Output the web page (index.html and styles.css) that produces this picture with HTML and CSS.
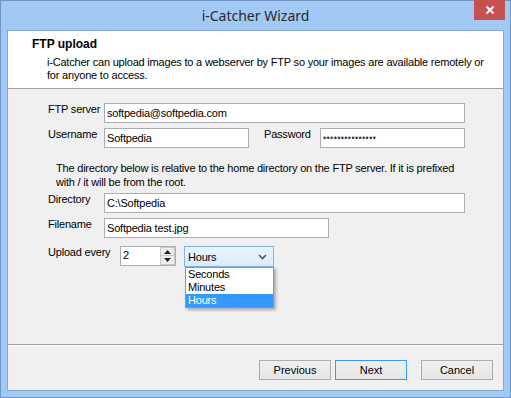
FILE: index.html
```html
<!DOCTYPE html>
<html lang="en">
<head>
    <meta charset="UTF-8">
    <title>i-Catcher Wizard</title>
    <link rel="stylesheet" href="styles.css">
</head>
<body>
    <div class="window">
        <div class="titlebar">
            <span></span>
            <span class="title">i-Catcher Wizard</span>
            <button class="close_btn">
                <svg width="10" height="8" viewBox="0 0 10 8"><path d="M1.5 0.5 L8.5 7.5 M8.5 0.5 L1.5 7.5" stroke="#fff" stroke-width="2"/></svg>
            </button>
        </div>
        <div class="content">
            <div class="header">
                <div class="header_title">FTP upload</div>
                <div class="header_desc">i-Catcher can upload images to a webserver by FTP so your images are available remotely or<br>for anyone to access.</div>
            </div>

            <div class="form">
                <div class="row">
                    <label class="label">FTP server</label>
                    <input class="field wide" type="text" value="softpedia@softpedia.com">
                </div>
                <div class="row">
                    <label class="label">Username</label>
                    <input class="field half" type="text" value="Softpedia">
                    <label class="label pass_label">Password</label>
                    <input class="field half pass" type="password" value="softpediasoftpe">
                </div>
                <div class="note">The directory below is relative to the home directory on the FTP server. If it is prefixed<br>with / it will be from the root.</div>
                <div class="row">
                    <label class="label">Directory</label>
                    <input class="field wide" type="text" value="C:\Softpedia">
                </div>
                <div class="row">
                    <label class="label">Filename</label>
                    <input class="field file" type="text" value="Softpedia test.jpg">
                </div>
                <div class="row upload_row">
                    <label class="label">Upload every</label>
                    <div class="spinner">
                        <span class="spin_value">2</span>
                        <div class="spin_buttons">
                            <div class="spin_btn">
                                <svg width="7" height="4" viewBox="0 0 7 4"><path d="M0 4 L3.5 0 L7 4 Z" fill="#222"/></svg>
                            </div>
                            <div class="spin_btn">
                                <svg width="7" height="4" viewBox="0 0 7 4"><path d="M0 0 L3.5 4 L7 0 Z" fill="#222"/></svg>
                            </div>
                        </div>
                    </div>
                    <div class="combo">
                        <div class="combo_box">
                            <span>Hours</span>
                            <svg width="9" height="6" viewBox="0 0 9 6"><path d="M1 1 L4.5 4.5 L8 1" stroke="#555" stroke-width="1.6" fill="none"/></svg>
                        </div>
                        <ul class="combo_list">
                            <li>Seconds</li>
                            <li>Minutes</li>
                            <li class="selected">Hours</li>
                        </ul>
                    </div>
                </div>
            </div>

            <div class="footer">
                <button class="btn">Previous</button>
                <button class="btn default">Next</button>
                <button class="btn cancel">Cancel</button>
            </div>
        </div>
    </div>
</body>
</html>
```

FILE: styles.css
```css
body {
    margin: 0;
    font-family: "Liberation Sans", Arial, sans-serif;
    font-size: 11px;
    letter-spacing: -0.2px;
    color: #000;
}
.window {
    width: 511px;
    height: 398px;
    box-sizing: border-box;
    border: 1px solid #7196c4;
    background-color: #a2c8f4;
    padding: 0 6px 6px 6px;
    display: flex;
    flex-direction: column;
}
.titlebar {
    height: 29px;
    display: grid;
    grid-template-columns: 1fr auto 1fr;
}
.title {
    font-family: "Noto Sans", "Open Sans", sans-serif;
    font-size: 14px;
    letter-spacing: 0;
    color: #2a2a2a;
    line-height: 29px;
}
.close_btn {
    justify-self: end;
    align-self: start;
    width: 31px;
    height: 20px;
    margin: -1px -1px 0 0;
    border: none;
    padding: 0;
    background-color: #c75050;
    display: flex;
    align-items: center;
    justify-content: center;
}
.content {
    flex: 1;
    border: 1px solid #86a8d2;
    background-color: #f0f0f0;
    display: flex;
    flex-direction: column;
}
.header {
    height: 58px;
    background-color: #fff;
    border-bottom: 1px solid #a0a0a0;
    padding: 6px 0 0 24px;
    box-sizing: border-box;
}
.header_title {
    font-weight: bold;
    font-size: 12px;
    letter-spacing: 0;
    line-height: 15px;
}
.header_desc {
    margin: 4px 0 0 15px;
    line-height: 13px;
}
.form {
    flex: 1;
    padding: 14px 0 0 40px;
}
.row {
    display: flex;
    align-items: flex-start;
    margin-bottom: 5px;
}
.label {
    width: 56px;
    line-height: 13px;
    flex-shrink: 0;
}
.pass_label {
    margin-left: 15px;
}
.field {
    height: 20px;
    box-sizing: border-box;
    border: 1px solid #abadb3;
    background-color: #fff;
    padding: 2px 2px 3px 2px;
    font-family: "Liberation Sans", Arial, sans-serif;
    font-size: 11px;
    letter-spacing: -0.2px;
    line-height: 13px;
    color: #000;
    outline: none;
    margin: 0;
}
.field.pass {
    font-size: 9px;
    letter-spacing: 0.4px;
    color: #333;
}
.wide { width: 361px; }
.half { width: 145px; }
.file { width: 225px; }
.note {
    margin: 13px 0 4px 8px;
    line-height: 14px;
}
.upload_row {
    margin-top: 8px;
}
.upload_row .label {
    width: 72px;
}
.spinner {
    width: 56px;
    height: 20px;
    box-sizing: border-box;
    border: 1px solid #abadb3;
    background-color: #fff;
    display: flex;
    justify-content: space-between;
}
.spin_value {
    padding: 2px 0 0 2px;
    line-height: 13px;
}
.spin_buttons {
    display: flex;
    flex-direction: column;
    width: 15px;
}
.spin_btn {
    height: 9px;
    border: 1px solid #c9c9c9;
    border-top-width: 0;
    background-color: #ececec;
    display: flex;
    align-items: center;
    justify-content: center;
}
.spin_btn:first-child {
    border-top-width: 1px;
    height: 8px;
}
.combo {
    position: relative;
    margin-left: 8px;
}
.combo_box {
    width: 90px;
    height: 21px;
    box-sizing: border-box;
    border: 1px solid #7eb4ea;
    background: linear-gradient(#ecf4fc, #dcecfc);
    display: flex;
    align-items: center;
    justify-content: space-between;
    padding: 0 6px 0 3px;
}
.combo_list {
    position: absolute;
    top: 21px;
    left: 1px;
    width: 89px;
    box-sizing: border-box;
    margin: 0;
    padding: 0;
    list-style: none;
    background-color: #fff;
    border: 1px solid #7a98c8;
    box-shadow: 2px 2px 3px rgba(0, 0, 0, 0.3);
}
.combo_list li {
    height: 13px;
    line-height: 13px;
    padding-left: 2px;
}
.combo_list li.selected {
    background-color: #3399ff;
    color: #fff;
}
.footer {
    height: 46px;
    border-top: 1px solid #a0a0a0;
    box-shadow: inset 0 1px 0 #fff;
    display: flex;
    justify-content: flex-end;
    align-items: flex-start;
    padding: 15px 10px 0 0;
    box-sizing: border-box;
}
.btn {
    width: 72px;
    height: 20px;
    margin: 0 0 0 4px;
    border: 1px solid #acacac;
    background: linear-gradient(#f0f0f0, #e5e5e5);
    font-family: "Liberation Sans", Arial, sans-serif;
    font-size: 11px;
    color: #000;
    padding: 0;
}
.btn.default {
    border-color: #3399ff;
}
.btn.cancel {
    margin-left: 14px;
}
```
